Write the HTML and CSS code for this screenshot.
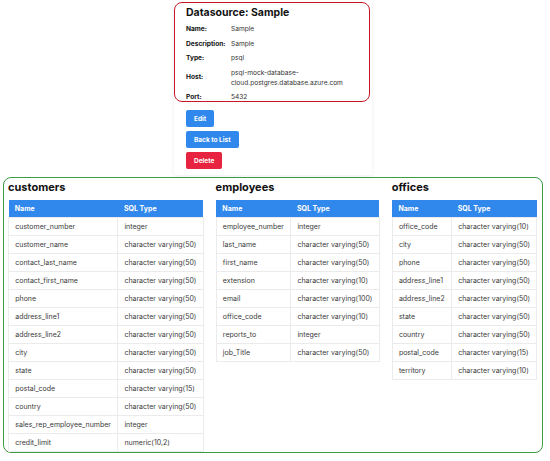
FILE: index.html
```html
<!DOCTYPE html>
<html>
<head>
<meta charset="utf-8">
<link rel="stylesheet" href="styles.css">
</head>
<body>
<div class="card">
  <div class="details">
    <h1 class="title">Datasource: Sample</h1>
    <table class="info">
      <tr><th>Name:</th><td>Sample</td></tr>
      <tr><th>Description:</th><td>Sample</td></tr>
      <tr><th>Type:</th><td>psql</td></tr>
      <tr><th>Host:</th><td>psql-mock-database-<br>cloud.postgres.database.azure.com</td></tr>
      <tr><th>Port:</th><td>5432</td></tr>
    </table>
  </div>
  <div class="actions">
    <button class="btn btn-blue">Edit</button>
    <button class="btn btn-blue">Back to List</button>
    <button class="btn btn-red">Delete</button>
  </div>
</div>

<div class="schema">
  <section class="entity">
    <h2 class="entity-name">customers</h2>
    <table class="cols">
      <thead><tr><th>Name</th><th>SQL Type</th></tr></thead>
      <tbody>
        <tr><td>customer_number</td><td>integer</td></tr>
        <tr><td>customer_name</td><td>character varying(50)</td></tr>
        <tr><td>contact_last_name</td><td>character varying(50)</td></tr>
        <tr><td>contact_first_name</td><td>character varying(50)</td></tr>
        <tr><td>phone</td><td>character varying(50)</td></tr>
        <tr><td>address_line1</td><td>character varying(50)</td></tr>
        <tr><td>address_line2</td><td>character varying(50)</td></tr>
        <tr><td>city</td><td>character varying(50)</td></tr>
        <tr><td>state</td><td>character varying(50)</td></tr>
        <tr><td>postal_code</td><td>character varying(15)</td></tr>
        <tr><td>country</td><td>character varying(50)</td></tr>
        <tr><td>sales_rep_employee_number</td><td>integer</td></tr>
        <tr><td>credit_limit</td><td>numeric(10,2)</td></tr>
      </tbody>
    </table>
  </section>
  <section class="entity">
    <h2 class="entity-name">employees</h2>
    <table class="cols">
      <thead><tr><th>Name</th><th>SQL Type</th></tr></thead>
      <tbody>
        <tr><td>employee_number</td><td>integer</td></tr>
        <tr><td>last_name</td><td>character varying(50)</td></tr>
        <tr><td>first_name</td><td>character varying(50)</td></tr>
        <tr><td>extension</td><td>character varying(10)</td></tr>
        <tr><td>email</td><td>character varying(100)</td></tr>
        <tr><td>office_code</td><td>character varying(10)</td></tr>
        <tr><td>reports_to</td><td>integer</td></tr>
        <tr><td>job_Title</td><td>character varying(50)</td></tr>
      </tbody>
    </table>
  </section>
  <section class="entity">
    <h2 class="entity-name">offices</h2>
    <table class="cols">
      <thead><tr><th>Name</th><th>SQL Type</th></tr></thead>
      <tbody>
        <tr><td>office_code</td><td>character varying(10)</td></tr>
        <tr><td>city</td><td>character varying(50)</td></tr>
        <tr><td>phone</td><td>character varying(50)</td></tr>
        <tr><td>address_line1</td><td>character varying(50)</td></tr>
        <tr><td>address_line2</td><td>character varying(50)</td></tr>
        <tr><td>state</td><td>character varying(50)</td></tr>
        <tr><td>country</td><td>character varying(50)</td></tr>
        <tr><td>postal_code</td><td>character varying(15)</td></tr>
        <tr><td>territory</td><td>character varying(10)</td></tr>
      </tbody>
    </table>
  </section>
</div>
</body>
</html>
```
FILE: styles.css
```css
* { box-sizing: border-box; }
html, body { margin: 0; padding: 0; background: #fff; }
body {
  font-family: Inter, "Noto Sans", "Liberation Sans", sans-serif;
  color: #333;
}

.card {
  width: 198px;
  margin: 0 0 0 174px;
  padding-top: 2px;
  padding-bottom: 6px;
  background: #fff;
  box-shadow: 0 1px 4px rgba(0, 0, 0, 0.08);
}
.details {
  width: 196px;
  border: 1px solid #c8172b;
  border-radius: 8px;
  padding: 3px 11px 0 11px;
  height: 100px;
}
.title {
  margin: 0 0 2px 0;
  font-size: 10.5px;
  line-height: 14px;
  font-weight: 700;
  color: #111;
}
.info { border-collapse: collapse; font-size: 6.6px; }
.info th {
  text-align: left;
  font-weight: 700;
  color: #111;
  padding: 2px 0;
  width: 45px;
  line-height: 10.5px;
  vertical-align: middle;
}
.info td {
  padding: 2px 0;
  line-height: 10px;
  color: #333;
}

.actions {
  display: flex;
  flex-direction: column;
  align-items: flex-start;
  gap: 4px;
  padding: 8px 0 0 12px;
}
.btn {
  border: none;
  border-radius: 2px;
  color: #fff;
  font-family: Inter, "Noto Sans", sans-serif;
  font-weight: 700;
  font-size: 6.5px;
  height: 17px;
  padding: 0 8px;
}
.btn-blue { background: #3188ec; }
.btn-red { background: #e7233f; }

.schema {
  margin: 2px 7px 0 3px;
  border: 1px solid #3a9c47;
  border-radius: 8px;
  padding: 2px 5px 1px 4px;
  display: flex;
  align-items: flex-start;
  gap: 12px;
  height: 276px;
}
.entity-name {
  margin: 0 0 6px 0;
  font-size: 11px;
  line-height: 14px;
  font-weight: 700;
  color: #111;
}
.cols {
  border-collapse: collapse;
  font-size: 7px;
}
.cols th {
  background: #3188ec;
  color: #fff;
  font-weight: 700;
  text-align: left;
  height: 17px;
  padding: 0 6.25px;
}
.cols td {
  height: 18px;
  padding: 0 6.25px;
  border: 1px solid #ebebeb;
  color: #3a3a3a;
  white-space: nowrap;
}
```
